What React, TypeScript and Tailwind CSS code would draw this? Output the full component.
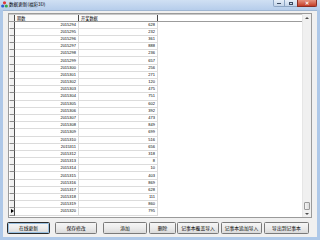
import React from 'react';

const rows: [string, string][] = [
  ['2015294', '628'],
  ['2015295', '232'],
  ['2015296', '361'],
  ['2015297', '888'],
  ['2015298', '236'],
  ['2015299', '657'],
  ['2015300', '256'],
  ['2015301', '271'],
  ['2015302', '120'],
  ['2015303', '475'],
  ['2015304', '751'],
  ['2015305', '602'],
  ['2015306', '392'],
  ['2015307', '473'],
  ['2015308', '849'],
  ['2015309', '699'],
  ['2015310', '516'],
  ['2015311', '656'],
  ['2015312', '318'],
  ['2015313', '8'],
  ['2015314', '10'],
  ['2015315', '403'],
  ['2015316', '869'],
  ['2015317', '628'],
  ['2015318', '111'],
  ['2015319', '860'],
  ['2015320', '795'],
];

const buttons = [
  { label: '在线更新', w: 'w-[43px]', ml: 'ml-[4px]', main: true },
  { label: '保存修改', w: 'w-[42px]', ml: 'ml-[5px]' },
  { label: '添加', w: 'w-[44px]', ml: 'ml-[6px]' },
  { label: '删除', w: 'w-[27px]', ml: 'ml-[2px]' },
  { label: '记事本覆盖导入', w: 'w-[42px]', ml: 'ml-[1px]' },
  { label: '记事本追加导入', w: 'w-[41px]', ml: 'ml-[2px]' },
  { label: '导出到记事本', w: 'w-[45px]', ml: 'ml-[2px]' },
];

function AppIcon() {
  return (
    <svg width="7" height="7" viewBox="0 0 7 7" className="shrink-0">
      <circle cx="3.5" cy="1.8" r="1.6" fill="#e03a3a" />
      <circle cx="1.7" cy="5" r="1.6" fill="#2f5fd0" />
      <circle cx="5.3" cy="5" r="1.6" fill="#3aa84a" />
    </svg>
  );
}

export default function App() {
  return (
    <div className="w-[320px] h-[240px] overflow-hidden flex flex-col bg-[#aec8e8] font-['Liberation_Sans','Noto_Sans_CJK_SC',sans-serif]">
      {/* Title bar */}
      <div className="h-[10px] flex items-start bg-gradient-to-b from-[#d0e0f3] to-[#b6cdeb]">
        <div className="flex items-center gap-[1px] pl-[1px] pt-[1px]">
          <AppIcon />
          <span className="text-[4.6px] leading-[7px] text-black font-['Noto_Sans_CJK_SC',sans-serif]">
            数据更新(福彩3D)
          </span>
        </div>
        <div className="ml-auto mr-[3px] flex h-[7px]">
          <div className="w-[12px] h-full flex items-end justify-center pb-[2px] rounded-bl-[2px] border border-t-0 border-[#8ea6c4] bg-gradient-to-b from-[#e6eef8] to-[#c4d5ea]">
            <div className="w-[4px] h-[1px] bg-[#3a4a60]" />
          </div>
          <div className="w-[12px] h-full flex items-center justify-center border-b border-[#8ea6c4] bg-gradient-to-b from-[#e6eef8] to-[#c4d5ea]">
            <div className="w-[4px] h-[3px] border border-[#3a4a60] border-t-[1.5px]" />
          </div>
          <div className="w-[20px] h-full flex items-center justify-center rounded-br-[2px] border border-t-0 border-[#8a2e24] bg-gradient-to-b from-[#e4917f] to-[#c43b25] text-white text-[5px] leading-none font-bold">
            ✕
          </div>
        </div>
      </div>

      {/* Client area */}
      <div className="flex-1 mx-[3px] mb-[3px] bg-[#f0f0f0] flex flex-col border-t border-[#9fb6d2]">
        {/* Grid */}
        <div className="mt-[2px] ml-[5px] mr-[5px] h-[205px] border border-[#9a9a9a] bg-white flex">
          <div className="flex-1 flex flex-col">
            {/* Header */}
            <div className="h-[7.5px] flex border-t border-[#c8c8c8] border-b border-b-[#9c9c9c] bg-[#fbfbfb]">
              <div className="w-[6px] border-r border-[#4a4a4a] bg-[#f0f0f0]" />
              <div className="w-[64px] border-r border-[#4a4a4a] flex items-center pl-[2px] text-[4.2px] leading-none text-black font-['Noto_Sans_CJK_SC',sans-serif]">
                期数
              </div>
              <div className="w-[79px] border-r border-[#4a4a4a] flex items-center pl-[2px] text-[4.2px] leading-none text-black font-['Noto_Sans_CJK_SC',sans-serif]">
                开奖数据
              </div>
              <div className="flex-1 bg-white" />
            </div>
            {rows.map(([no, val], i) => (
              <div key={no} className="h-[7.2px] flex">
                <div className="w-[6px] border-r border-b border-l border-l-white border-r-[#505050] border-b-[#8a8a8a] bg-[#f0f0f0] flex items-center justify-center">
                  {i === rows.length - 1 && (
                    <span className="block w-0 h-0 border-y-[2px] border-y-transparent border-l-[3px] border-l-black" />
                  )}
                </div>
                <div className="w-[64px] border-r border-b border-[#dcdcdc] flex items-center justify-end pr-[2px] text-[4px] leading-none text-black">
                  {no}
                </div>
                <div className="w-[79px] border-r border-b border-[#dcdcdc] flex items-center justify-end pr-[2px] text-[4px] leading-none text-black">
                  {val}
                </div>
              </div>
            ))}
          </div>
          {/* Scrollbar */}
          <div className="w-[9px] bg-[#f0f0f0] border-l border-[#e6e6e6] flex flex-col items-center">
            <div className="h-[7px] w-full flex items-center justify-center">
              <span className="block w-0 h-0 border-x-[2px] border-x-transparent border-b-[2px] border-b-[#505050]" />
            </div>
            <div className="flex-1" />
            <div className="w-[6px] h-[8px] bg-gradient-to-r from-[#f4f4f4] to-[#dcdcdc] border border-[#9a9a9a] rounded-[1px]" />
            <div className="h-[7px] w-full flex items-center justify-center">
              <span className="block w-0 h-0 border-x-[2px] border-x-transparent border-t-[2px] border-t-[#505050]" />
            </div>
          </div>
        </div>

        {/* Buttons */}
        <div className="mt-[4px] h-[12px] flex">
          {buttons.map((b) => (
            <div
              key={b.label}
              className={`${b.w} ${b.ml} h-full shrink-0 flex items-center justify-center rounded-[1.5px] border bg-gradient-to-b from-[#f6f6f6] via-[#ebebeb] to-[#dadada] text-[4.8px] leading-none text-black whitespace-nowrap font-['Noto_Sans_CJK_SC',sans-serif] ${
                b.main ? 'border-[#2a2a2a] ring-1 ring-inset ring-[#9ac0e0]' : 'border-[#7a7a7a]'
              }`}
            >
              {b.label}
            </div>
          ))}
        </div>
      </div>
    </div>
  );
}
